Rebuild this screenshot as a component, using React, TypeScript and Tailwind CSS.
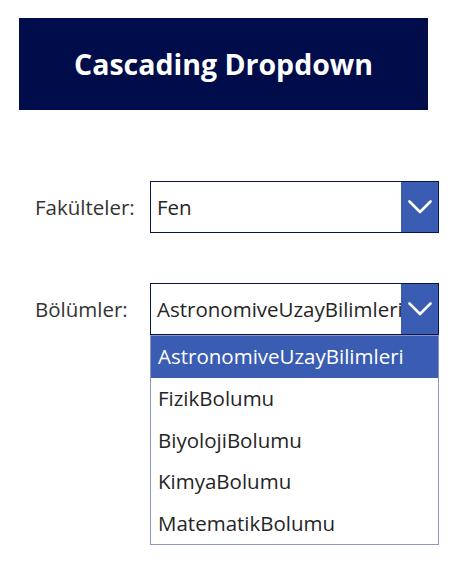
const bolumler = [
  "AstronomiveUzayBilimleri",
  "FizikBolumu",
  "BiyolojiBolumu",
  "KimyaBolumu",
  "MatematikBolumu",
];

export default function App() {
  return (
    <main
      className="min-h-[579px] w-[449px] bg-white pt-[18px]"
      style={{ fontFamily: '"Open Sans", "Noto Sans", sans-serif' }}
    >
      <header className="ml-[19px] flex h-[92px] w-[409px] items-center justify-center bg-[#010c4a]">
        <h1 className="text-[28.5px] font-bold text-white">Cascading Dropdown</h1>
      </header>

      <div className="mt-[71px] flex items-center">
        <label className="w-[150px] pl-[35px] text-[20.5px] text-[#333]">Fakülteler:</label>
        <Select value="Fen" />
      </div>

      <div className="mt-[50px] flex items-start">
        <label className="flex h-[52px] w-[150px] items-center pl-[35px] text-[20.5px] text-[#333]">
          Bölümler:
        </label>
        <div className="flex flex-col">
          <Select value="AstronomiveUzayBilimleri" />
          <ul className="w-[289px] border border-[#8b95c8]">
            {bolumler.map((b, i) => (
              <li
                key={b}
                className={
                  i === 0
                    ? "flex h-[41.6px] items-center bg-[#3a5db3] pl-[7px] text-[20.5px] text-white"
                    : "flex h-[41.6px] items-center pl-[7px] text-[20.5px] text-[#252525]"
                }
              >
                {b}
              </li>
            ))}
          </ul>
        </div>
      </div>
    </main>
  );
}

function Select({ value }: { value: string }) {
  return (
    <div className="flex h-[52px] w-[289px] border border-[#0b1550]">
      <div className="flex min-w-0 flex-1 items-center overflow-hidden whitespace-nowrap pl-[6px] text-[20.5px] text-[#252525]">
        {value}
      </div>
      <div className="flex w-[37px] shrink-0 items-center justify-center bg-[#3a5db3]">
        <svg width="24" height="14" viewBox="0 0 24 14" fill="none">
          <polyline
            points="1.5,1.5 12,12 22.5,1.5"
            stroke="white"
            strokeWidth="2.6"
            strokeLinecap="round"
            strokeLinejoin="round"
          />
        </svg>
      </div>
    </div>
  );
}
